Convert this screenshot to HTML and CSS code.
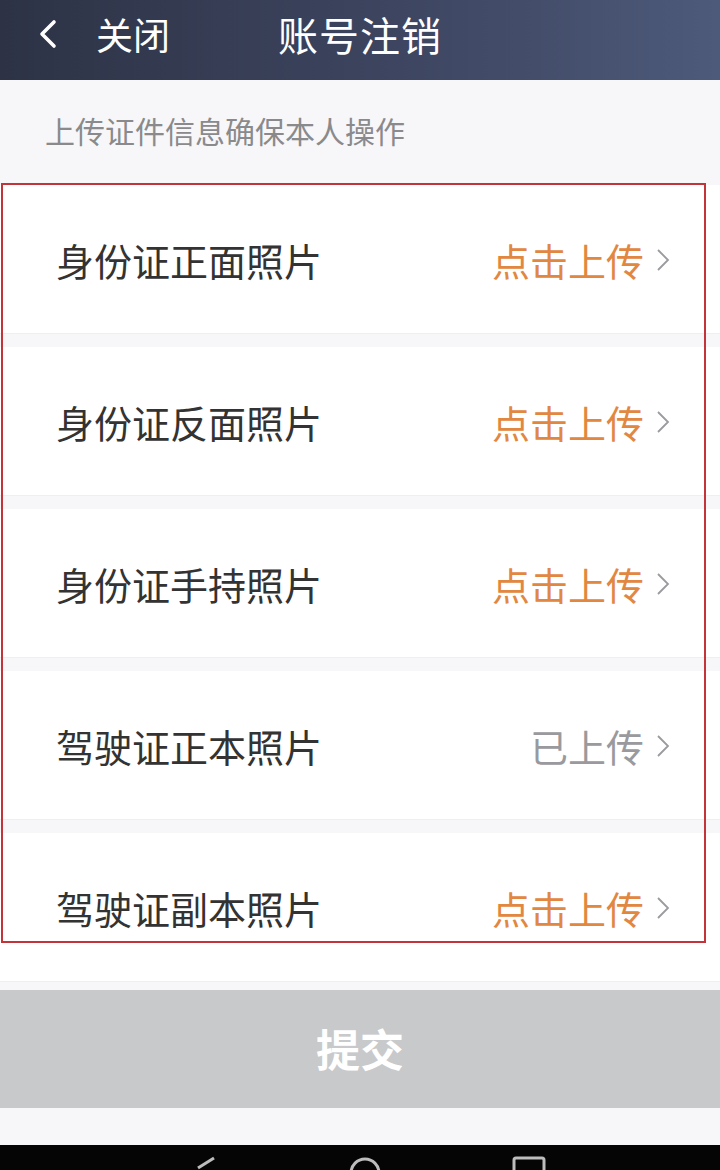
FILE: index.html
```html
<!DOCTYPE html>
<html lang="zh-CN">
<head>
    <meta charset="UTF-8">
    <meta name="viewport" content="width=device-width, initial-scale=1.0">
    <title>账号注销</title>
    <link rel="stylesheet" href="styles.css">
</head>
<body>
    <div class="page">
        <header class="top-bar">
            <a class="back" href="#">
                <svg width="24" height="30" viewBox="0 0 24 30"><path d="M18 3 L6 15 L18 27" fill="none" stroke="#fff" stroke-width="3.6" stroke-linecap="round" stroke-linejoin="round"/></svg>
                <span>关闭</span>
            </a>
            <h1>账号注销</h1>
        </header>

        <p class="hint">上传证件信息确保本人操作</p>

        <div class="list">
            <div class="row">
                <span class="label">身份证正面照片</span>
                <span class="action">点击上传</span>
                <svg class="arrow" width="14" height="24" viewBox="0 0 14 24"><path d="M2 2 L12 12 L2 22" fill="none" stroke="#9a9a9f" stroke-width="1.8"/></svg>
            </div>
            <div class="row">
                <span class="label">身份证反面照片</span>
                <span class="action">点击上传</span>
                <svg class="arrow" width="14" height="24" viewBox="0 0 14 24"><path d="M2 2 L12 12 L2 22" fill="none" stroke="#9a9a9f" stroke-width="1.8"/></svg>
            </div>
            <div class="row">
                <span class="label">身份证手持照片</span>
                <span class="action">点击上传</span>
                <svg class="arrow" width="14" height="24" viewBox="0 0 14 24"><path d="M2 2 L12 12 L2 22" fill="none" stroke="#9a9a9f" stroke-width="1.8"/></svg>
            </div>
            <div class="row">
                <span class="label">驾驶证正本照片</span>
                <span class="action done">已上传</span>
                <svg class="arrow" width="14" height="24" viewBox="0 0 14 24"><path d="M2 2 L12 12 L2 22" fill="none" stroke="#9a9a9f" stroke-width="1.8"/></svg>
            </div>
            <div class="row">
                <span class="label">驾驶证副本照片</span>
                <span class="action">点击上传</span>
                <svg class="arrow" width="14" height="24" viewBox="0 0 14 24"><path d="M2 2 L12 12 L2 22" fill="none" stroke="#9a9a9f" stroke-width="1.8"/></svg>
            </div>
            <div class="mark"></div>
        </div>

        <button class="submit-btn" type="button">提交</button>

        <div class="spacer"></div>

        <nav class="sys-bar">
            <svg width="24" height="14" viewBox="0 0 24 14"><path d="M20 2 L4 12" fill="none" stroke="#bdbdbd" stroke-width="3"/></svg>
            <svg width="34" height="14" viewBox="0 0 34 14"><circle cx="17" cy="17" r="14" fill="none" stroke="#bdbdbd" stroke-width="3"/></svg>
            <svg width="34" height="14" viewBox="0 0 34 14"><rect x="2" y="2" width="30" height="30" rx="2" fill="none" stroke="#bdbdbd" stroke-width="3"/></svg>
        </nav>
    </div>
</body>
</html>
```

FILE: styles.css
```css
* {
    box-sizing: border-box;
}

body {
    margin: 0;
    background: #f7f7f9;
    font-family: "Noto Sans CJK SC", "Noto Sans", sans-serif;
}

.page {
    width: 720px;
    height: 1170px;
    display: flex;
    flex-direction: column;
    overflow: hidden;
}

.top-bar {
    height: 80px;
    flex-shrink: 0;
    display: flex;
    align-items: center;
    padding: 0 0 12px 36px;
    background: linear-gradient(90deg, #2d3345 0%, #3d4560 55%, #4d5a7a 100%);
    color: #fff;
}

.back {
    display: flex;
    align-items: center;
    gap: 36px;
    color: #fff;
    text-decoration: none;
    font-size: 37px;
    line-height: 1;
}

.top-bar h1 {
    margin: 0 0 0 108px;
    font-size: 40px;
    font-weight: normal;
    line-height: 1;
    letter-spacing: 1px;
}

.hint {
    margin: 0;
    height: 105px;
    flex-shrink: 0;
    padding: 32px 0 0 45px;
    font-size: 30px;
    line-height: 36px;
    color: #8a8a8c;
}

.list {
    position: relative;
    display: flex;
    flex-direction: column;
    gap: 13px;
}

.row {
    height: 149px;
    display: flex;
    align-items: center;
    padding: 0 50px 0 56px;
    background: #fff;
    border-bottom: 1px solid #efeff1;
}

.label {
    flex: 1;
    font-size: 38px;
    color: #333;
}

.action {
    font-size: 38px;
    color: #e2873f;
}

.action.done {
    color: #9a9a9e;
}

.arrow {
    margin-left: 12px;
    margin-top: 2px;
}

/* красная рамка поверх списка */
.mark {
    position: absolute;
    left: 1px;
    top: -2px;
    width: 705px;
    height: 760px;
    border: 2px solid #c3343a;
    pointer-events: none;
}

.submit-btn {
    margin-top: 8px;
    height: 118px;
    flex-shrink: 0;
    border: none;
    background: #c8c9cb;
    color: #fff;
    font-family: inherit;
    font-size: 44px;
    font-weight: bold;
    padding-bottom: 4px;
}

.spacer {
    flex: 1;
}

.sys-bar {
    height: 25px;
    flex-shrink: 0;
    background: #050505;
    display: flex;
    justify-content: center;
    align-items: flex-end;
    gap: 130px;
    padding-left: 20px;
}
```
